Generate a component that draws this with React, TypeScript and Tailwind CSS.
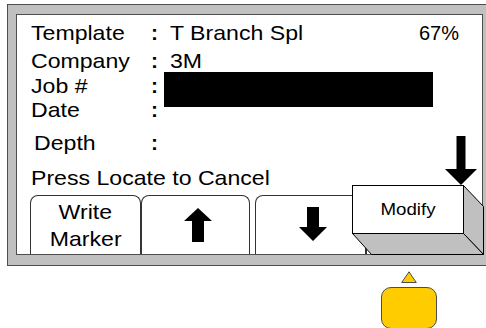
import type { ReactNode } from "react";

// Locator screen mock: job info fields, soft-key tabs, and the raised "Modify" key.

const FIELDS = [
  { label: "Template", value: "T Branch Spl", row: "mt-[7px]", indent: "" },
  { label: "Company", value: "3M", row: "mt-[6px]", indent: "" },
  { label: "Job #", value: "", row: "mt-[3px]", indent: "" },
  { label: "Date", value: "", row: "mt-[2px]", indent: "" },
  { label: "Depth", value: "", row: "mt-[11px]", indent: "pl-[3px]" },
];

function Wide({ children, className = "" }: { children: ReactNode; className?: string }) {
  return <span className={`inline-block origin-left scale-x-[1.1] whitespace-nowrap ${className}`}>{children}</span>;
}

function UpArrow() {
  return (
    <svg width="28" height="34" viewBox="0 0 28 34" className="ml-[4px]">
      <polygon points="14,0 28,13 20,13 20,34 8,34 8,13 0,13" fill="#000" />
    </svg>
  );
}

function DownArrow() {
  return (
    <svg width="28" height="34" viewBox="0 0 28 34" className="ml-[5px] -mt-[3px]">
      <polygon points="8,0 20,0 20,20 28,20 14,34 0,20 8,20" fill="#000" />
    </svg>
  );
}

function Tab({ className, children }: { className: string; children?: ReactNode }) {
  return (
    <div
      className={`flex h-[59px] shrink-0 flex-col items-center justify-center rounded-t-[8px] border-x border-t border-[#333] bg-white ${className}`}
    >
      {children}
    </div>
  );
}

function ModifyKey() {
  return (
    <div className="absolute left-[335px] top-[170px] h-[71px] w-[132px]">
      <svg width="132" height="71" viewBox="0 0 132 71" className="absolute inset-0">
        <polygon points="111.5,0.5 131.5,21.5 131.5,69.5 111.5,48.5" fill="#c0c0c0" stroke="#000" />
        <polygon points="0.5,48.5 19.5,69.5 131.5,69.5 111.5,48.5" fill="#c0c0c0" stroke="#000" />
      </svg>
      <div className="relative flex h-[49px] w-[112px] items-center justify-center border border-black bg-white text-[17px]">
        <span className="inline-block scale-x-[1.1]">Modify</span>
      </div>
    </div>
  );
}

export default function App() {
  return (
    <div className="h-[328px] w-[486px] overflow-hidden bg-white font-['Liberation_Sans',Arial,sans-serif] text-black">
      <div className="ml-[7px] mt-[4px] w-[492px] border border-[#4d4d4d] bg-[#c0c0c0] pb-[10px] pl-[8px] pt-[9px]">
        <div className="relative flex h-[241px] w-[467px] flex-col border border-[#4d4d4d] bg-white">
          {FIELDS.map((f) => (
            <div key={f.label} className={`flex h-[22px] items-baseline pl-[14px] text-[21px] leading-[22px] ${f.row}`}>
              <div className={`w-[120px] ${f.indent}`}>
                <Wide>{f.label}</Wide>
              </div>
              <div className="w-[19px] font-bold">:</div>
              <Wide>{f.value}</Wide>
              {f.label === "Template" && <span className="ml-auto mr-[23px] text-[20px]">67%</span>}
            </div>
          ))}

          <div className="mt-[13px] h-[22px] pl-[14px] text-[21px] leading-[22px]">
            <Wide>Press Locate to Cancel</Wide>
          </div>

          <div className="mt-auto flex pl-[13px]">
            <Tab className="w-[111px] text-[21px] leading-[27px]">
              <span className="inline-block scale-x-[1.1]">Write</span>
              <span className="inline-block scale-x-[1.1]">Marker</span>
            </Tab>
            <Tab className="w-[109px]">
              <UpArrow />
            </Tab>
            <Tab className="ml-[5px] w-[111px]">
              <DownArrow />
            </Tab>
            <Tab className="w-[111px]" />
          </div>

          {/* redacted job number */}
          <div className="absolute left-[147px] top-[57px] h-[35px] w-[269px] bg-black" />

          <svg width="32" height="49" viewBox="0 0 32 49" className="absolute left-[428px] top-[121px]">
            <polygon points="11.5,0 20.5,0 20.5,33 32,33 16,49 0,33 11.5,33" fill="#000" />
          </svg>

          <ModifyKey />
        </div>
      </div>

      <div className="ml-[381px] flex w-[56px] flex-col items-center">
        <svg width="16" height="12" viewBox="0 0 16 12" className="mt-[5px]">
          <polygon points="8,0.8 15.3,11.5 0.7,11.5" fill="#ffcc00" stroke="#4d4d4d" />
        </svg>
        <div className="mt-[4px] h-[42px] w-[56px] rounded-[10px] border border-[#4d4d4d] bg-[#ffcc00]" />
      </div>
    </div>
  );
}
